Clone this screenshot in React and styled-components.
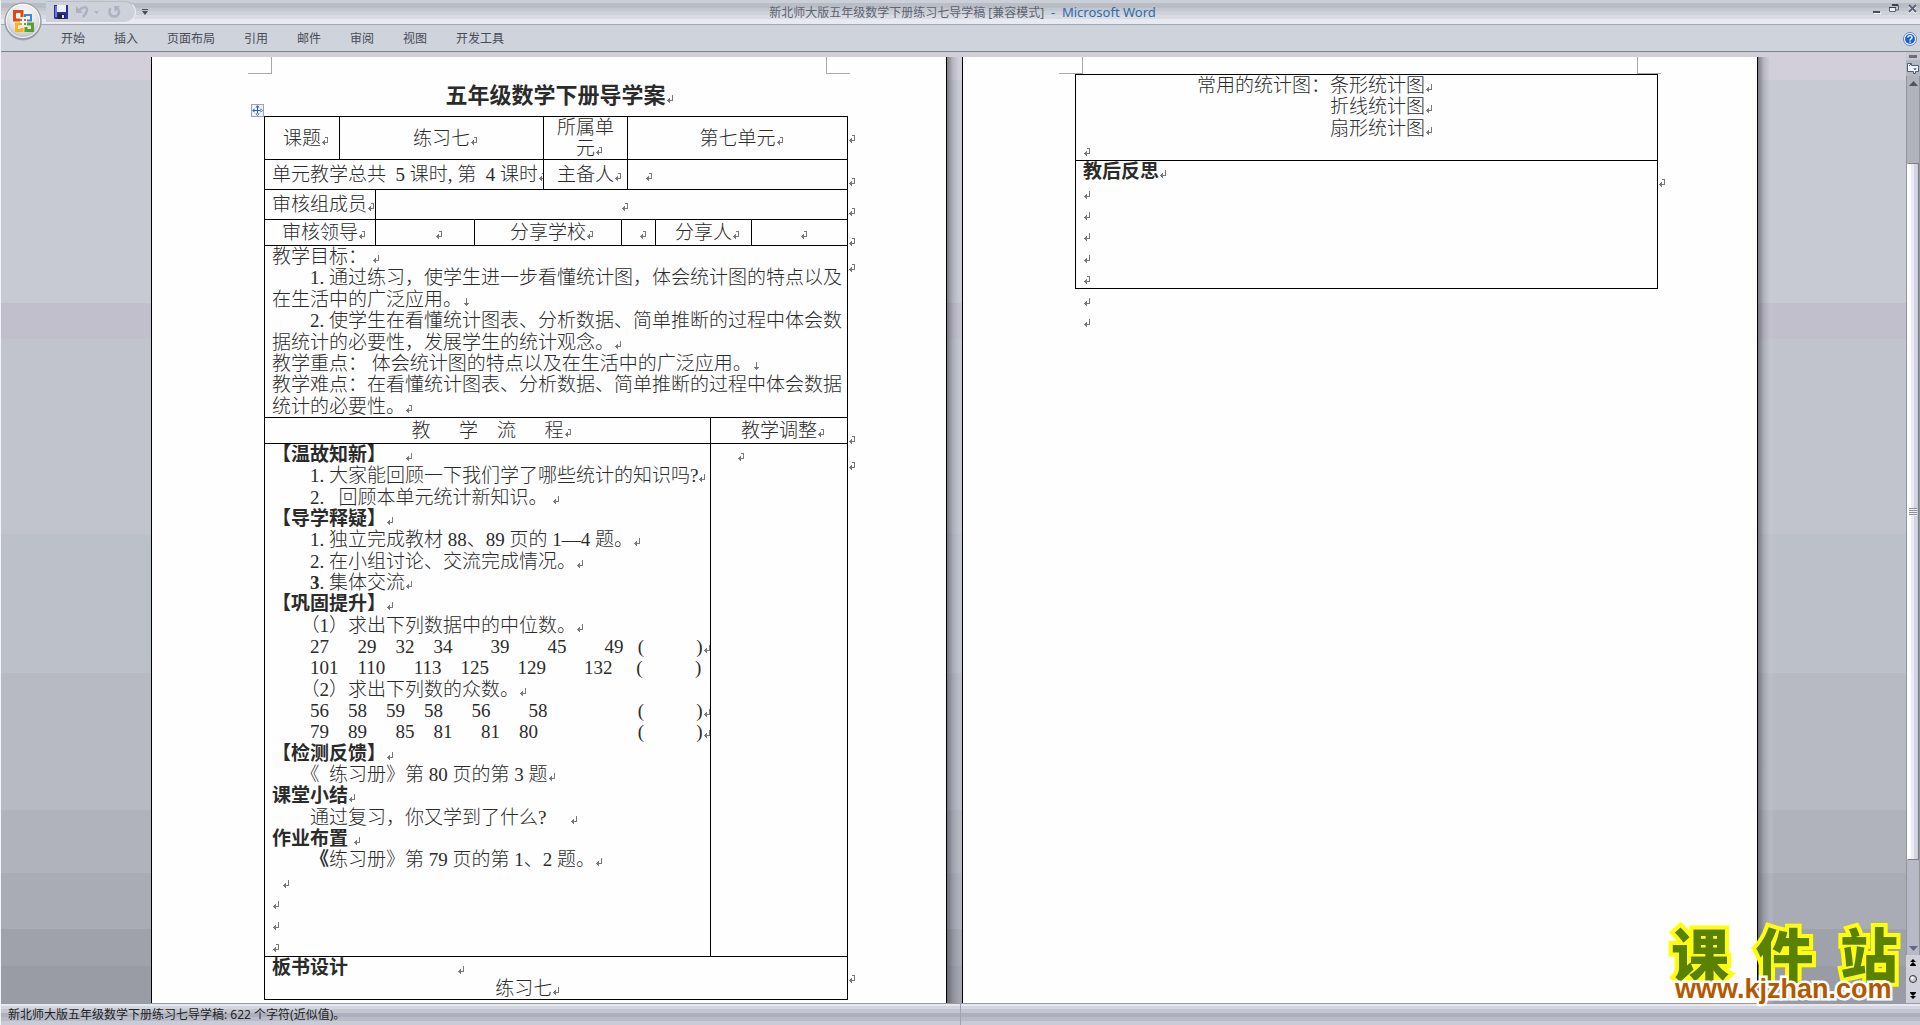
import React from "react";
import styled, { createGlobalStyle, css } from "styled-components";

const GlobalStyle = createGlobalStyle`
  * {
    box-sizing: border-box;
  }

  body {
    margin: 0;
    background: #b7bac3;
    font-family: "Noto Sans", "Noto Sans CJK SC", sans-serif;
    font-size: 12px;
  }

  button {
    border: 0;
    padding: 0;
    background: none;
    font: inherit;
    color: inherit;
    display: flex;
    align-items: center;
    justify-content: center;
  }
`;

const Window = styled.div`
  position: relative;
  height: 100vh;
  display: grid;
  grid-template-rows: 25px 27px minmax(0, 1fr) 22px;
  border-left: 1px solid #f2f3f6;
  overflow: hidden;
`;

const TitleBar = styled.header`
  display: grid;
  grid-template-columns: 1fr auto 1fr;
  align-items: center;
  border-bottom: 1px solid #a3a7b1;
  background: linear-gradient(
    #cbcfd8 0 3px,
    #b9bdc6 3px 8px,
    #c3c7d0 8px 11px,
    #cdd1da 11px 15px,
    #d8dbe2 15px 19px,
    #e7eaf2 19px 24px
  );
`;

const QuickAccess = styled.div`
  display: flex;
  align-items: center;
  align-self: start;
  gap: 6px;
  margin: 1px 0 0 45px;
`;

const QuickPill = styled.div`
  display: flex;
  align-items: center;
  gap: 8px;
  width: 90px;
  height: 22px;
  padding-left: 8px;
  border: 1px solid #eceef3;
  border-top-color: #b9bdc6;
  border-left: 0;
  border-radius: 0 12px 12px 0;
  background: #cdd1da;
`;

const Caption = styled.h1`
  margin: 0;
  padding-left: 4px;
  font-size: 12px;
  line-height: 20px;
  font-weight: 400;
  color: #5d6371;
  white-space: pre;

  span {
    font-size: 13px;
    color: #2d6ca8;
  }
`;

const WindowButtons = styled.div`
  display: flex;
  justify-content: flex-end;
  gap: 8px;
  padding: 0 2px 6px 0;
`;

const Ribbon = styled.nav`
  display: flex;
  align-items: center;
  gap: 29px;
  padding: 1px 3px 0 60px;
  background: #cfd3dc;
  border-bottom: 1px solid #7e828b;
`;

const Tab = styled.button`
  line-height: 22px;
  color: #464b57;
`;

const HelpButton = styled.button`
  margin-left: auto;
`;

const OfficeButton = styled.button`
  position: absolute;
  top: 1px;
  left: 2px;
`;

const Workspace = styled.main`
  display: flex;
  min-height: 0;
`;

const Desk = styled.div`
  flex: 1;
  display: flex;
  justify-content: center;
  padding: 5px 0 0 2px;
  overflow: hidden;
  background: linear-gradient(
    #d2cfda 0 28px,
    #c8cad3 28px 251px,
    #c1bfcc 251px 287px,
    #c2c4cd 287px 482px,
    #bcc0c9 482px 621px,
    #b7bac3 621px 758px,
    #b0b3bc 758px 821px,
    #a9acb5 821px 877px,
    #9fa2aa 877px 914px,
    #999ca5 914px
  );
`;

const Page = styled.article`
  flex: 0 1 796px;
  min-width: 0;
  border: solid #000;
  border-width: 0 1px;
  background: #fefefe;
`;

const PageShade = styled.div`
  flex: 0 0 15px;
  margin-right: ${(props) => (props.$last ? "-15px" : 0)};
  background: linear-gradient(
    90deg,
    rgba(70, 72, 80, 0.6),
    rgba(110, 112, 122, 0.25) 6px,
    rgba(200, 202, 214, 0.2) 12px
  );
`;

const PageMargin = styled.div`
  display: flex;
  justify-content: space-between;
  height: 17px;
  padding: 0 96px;
`;

const Corner = styled.span`
  width: 24px;
  border-bottom: 1px solid #a8a8b4;
  border-${(props) => props.$side}: 1px solid #a8a8b4;
`;

const PageBody = styled.div`
  padding: 0 84px 0 112px;
  font-family: "Liberation Serif", "Noto Sans CJK SC", serif;
  font-size: 19px;
  font-weight: 300;
  line-height: 21px;
  color: #2b2b2b;
`;

const DocTitle = styled.h2`
  display: flex;
  align-items: center;
  justify-content: center;
  height: 42px;
  margin: 0;
  padding-right: 15px;
  font-size: 22px;
  font-weight: 700;
`;

const TableFrame = styled.div`
  position: relative;
`;

const MoveHandle = styled.button`
  position: absolute;
  top: -12px;
  left: -13px;
  width: 13px;
  height: 13px;
  border: 1px solid #9aa3b8;
  background: #eef1f8;
`;

const Table = styled.table`
  width: 100%;
  table-layout: fixed;
  border-collapse: collapse;
`;

const Row = styled.tr`
  height: ${(props) => props.$height}px;
`;

const Cell = styled.td`
  padding: 0 7px;
  border: 1px solid #000;
  overflow: hidden;
  white-space: pre;
  text-align: ${(props) => (props.$left ? "left" : "center")};
  ${(props) =>
    props.$top &&
    css`
      vertical-align: top;
    `}
`;

const RowEnd = styled.td`
  padding: 14px 0 0;
  line-height: 12px;
  vertical-align: top;
`;

const Lines = styled.div`
  display: grid;
  grid-auto-rows: 1fr;
  height: ${(props) => props.$height}px;
`;

const Line = styled.div`
  line-height: 21px;
  white-space: pre;

  b {
    font-weight: 700;
  }
`;

const MarkIcon = styled.svg`
  width: 8px;
  height: 8px;
  margin-right: -8px;
  fill: none;
  stroke: #7a7a7a;
  shape-rendering: crispEdges;
`;

const Scroller = styled.div`
  flex: 0 0 14px;
  display: flex;
  flex-direction: column;
  align-items: stretch;
  background: #c5c8d1;
`;

const SplitHandle = styled.div`
  width: 8px;
  height: 3px;
  margin: 3px auto 2px;
  background: #6b6e76;
`;

const RulerButton = styled.button`
  height: 16px;
  background: #b3b8c3;
`;

const Track = styled.div`
  flex: 1;
  display: flex;
  flex-direction: column;
  border: solid #92959e;
  border-width: 0 1px;
  background: #b0b3bc;
`;

const ArrowButton = styled.button`
  height: 14px;
`;

const Thumb = styled.div`
  flex: 0 1 697px;
  margin-top: 73px;
  display: flex;
  align-items: center;
  justify-content: center;
  border: 1px solid #7c7f88;
  border-left-color: #fff;
  background: linear-gradient(90deg, #fff 0 3px, #eceaf4 3px 6px, #d3d6e2 6px 9px, #c8cbd6 9px);
`;

const Grip = styled.div`
  width: 8px;
  height: 8px;
  background: repeating-linear-gradient(#8b8e98 0 1px, #f2f3f7 1px 2px);
`;

const TrackEnd = styled.div`
  flex: 1;
  display: flex;
  flex-direction: column;
  justify-content: flex-end;
  background: #b7bac6;
`;

const Browse = styled.div`
  display: flex;
  flex-direction: column;
  justify-content: space-around;
  height: 48px;
  background: #cfd1da;
`;

const StatusBar = styled.footer`
  display: grid;
  grid-template-columns: 1fr 1fr;
  align-items: center;
  border-top: 1px solid #989ba5;
  background: linear-gradient(
    #e6e8ef 0 2px,
    #d3d6df 2px 5px,
    #c3c6d0 5px 9px,
    #adb0bc 9px 13px,
    #b9bcc8 13px 17px,
    #c9ccd7 17px
  );
  color: #222;

  span {
    padding-left: 7px;
    line-height: 21px;
    border-right: 1px solid #a0a3ad;
  }
`;

const SiteLogo = styled.a`
  position: absolute;
  right: 22px;
  bottom: 22px;
  width: 227px;
  text-decoration: none;
`;

const LogoName = styled.div`
  display: flex;
  justify-content: space-between;
  font-family: "Noto Sans CJK SC", sans-serif;
  font-size: 58px;
  line-height: 46px;
  font-weight: 900;
  color: #5a8200;
  -webkit-text-stroke: 8px #ff0;
  paint-order: stroke fill;
  text-shadow: 0 0 1px #fff;
`;

const LogoUrl = styled.div`
  padding-left: 4px;
  font-family: "Liberation Sans", sans-serif;
  font-size: 27px;
  line-height: 28px;
  font-weight: 700;
  color: #b35900;
  -webkit-text-stroke: 5px #fff;
  paint-order: stroke fill;
`;

const markPaths = {
  paragraph: "M6.5 0v5.5H1M3.5 3v5M2.5 4v3",
  cell: "M4 .5h2.5v5H1M3.5 3v5M2.5 4v3",
  line: "M4.5 0v8M2 5.5h5M3 6.5h3",
};

function Mark({ type = "paragraph" }) {
  return (
    <MarkIcon viewBox="0 0 8 8" aria-hidden="true">
      <path d={markPaths[type]} />
    </MarkIcon>
  );
}

// half-width blanks, half an em each
const sp = (count) => "\u2002".repeat(count);

function TextLines({ lines, height }) {
  return (
    <Lines $height={height}>
      {lines.map(({ bold, text = "", mark = "paragraph" }, i) => (
        <Line key={i}>
          {bold && <b>{bold}</b>}
          {text}
          {mark !== "none" && <Mark type={mark} />}
        </Line>
      ))}
    </Lines>
  );
}

const goals = [
  { text: "教学目标： " },
  { text: `${sp(4)}1. 通过练习，使学生进一步看懂统计图，体会统计图的特点以及`, mark: "none" },
  { text: "在生活中的广泛应用。", mark: "line" },
  { text: `${sp(4)}2. 使学生在看懂统计图表、分析数据、简单推断的过程中体会数`, mark: "none" },
  { text: "据统计的必要性，发展学生的统计观念。" },
  { text: "教学重点： 体会统计图的特点以及在生活中的广泛应用。", mark: "line" },
  { text: "教学难点：在看懂统计图表、分析数据、简单推断的过程中体会数据", mark: "none" },
  { text: "统计的必要性。", mark: "cell" },
];

// each number is followed by its own count of half-width blanks
const series = (items) => sp(4) + items.map(([n, gap]) => n + sp(gap)).join("") + ` (${sp(5)} )`;

const process = [
  { bold: "【温故知新】", text: sp(2) },
  { text: `${sp(4)}1. 大家能回顾一下我们学了哪些统计的知识吗?` },
  { text: `${sp(4)}2. ${sp(1)}回顾本单元统计新知识。 ` },
  { bold: "【导学释疑】" },
  { text: `${sp(4)}1. 独立完成教材 88、89 页的 1—4 题。` },
  { text: `${sp(4)}2. 在小组讨论、交流完成情况。` },
  { bold: `${sp(4)}3`, text: ". 集体交流" },
  { bold: "【巩固提升】" },
  { text: `${sp(3)}（1）求出下列数据中的中位数。` },
  { text: series([[27, 3], [29, 2], [32, 2], [34, 4], [39, 4], [45, 4], [49, 1]]) },
  { text: series([[101, 2], [110, 3], [113, 2], [125, 3], [129, 4], [132, 2]]), mark: "none" },
  { text: `${sp(3)}（2）求出下列数的众数。` },
  { text: series([[56, 2], [58, 2], [59, 2], [58, 3], [56, 4], [58, 9]]) },
  { text: series([[79, 2], [89, 3], [85, 2], [81, 3], [81, 2], [80, 10]]) },
  { bold: "【检测反馈】" },
  { text: `${sp(3)}《${sp(1)}练习册》第 80 页的第 3 题` },
  { bold: "课堂小结" },
  { text: `${sp(4)}通过复习，你又学到了什么? ${sp(2)}` },
  { bold: "作业布置", text: " " },
  { bold: `${sp(4)}《`, text: "练习册》第 79 页的第 1、2 题。" },
  { text: sp(1) },
  {},
  {},
  { mark: "cell" },
];

const board = [
  { bold: "板书设计", text: `${sp(11)} ` },
  { text: `${sp(23)} 练习七` },
];

const charts = [
  { text: `${sp(12)}常用的统计图：条形统计图` },
  { text: `${sp(26)}折线统计图` },
  { text: `${sp(26)}扇形统计图` },
  { mark: "cell" },
];

const reflection = [{ bold: "教后反思" }, {}, {}, {}, {}, { mark: "cell" }];

const columns = [75, 36, 99, 69, 78, 6, 28, 55, 41, 96, 15];

function DocRow({ height, children }) {
  return (
    <Row $height={height}>
      {children}
      <RowEnd>
        <Mark type="cell" />
      </RowEnd>
    </Row>
  );
}

function Sheet({ children }) {
  return (
    <Page>
      <PageMargin>
        <Corner $side="right" />
        <Corner $side="left" />
      </PageMargin>
      <PageBody>{children}</PageBody>
    </Page>
  );
}

function LessonTable() {
  return (
    <TableFrame>
      <MoveHandle aria-label="移动表格">
        <svg width="11" height="11" viewBox="0 0 11 11" fill="#2f62bd">
          <path d="M5 1h1v9H5zM1 5h9v1H1zM5.500 0l2 2.500h-4zM5.500 11l2-2.500h-4zM0 5.500l2.500-2v4zM11 5.500l-2.500-2v4z" />
        </svg>
      </MoveHandle>
      <Table>
        <colgroup>
          {columns.map((width, i) => (
            <col key={i} width={width} />
          ))}
        </colgroup>
        <tbody>
          <DocRow height={43}>
            <Cell>课题<Mark type="cell" /></Cell>
            <Cell colSpan={3}>练习七<Mark type="cell" /></Cell>
            <Cell colSpan={2}>所属单{"\n"}元<Mark type="cell" /></Cell>
            <Cell colSpan={4}>第七单元<Mark type="cell" /></Cell>
          </DocRow>
          <DocRow height={30}>
            <Cell colSpan={4} $left>
              {`单元教学总共${sp(1)}5 课时, 第${sp(1)}4 课时`}
              <Mark type="cell" />
            </Cell>
            <Cell colSpan={2}>主备人<Mark type="cell" /></Cell>
            <Cell colSpan={4} $left>{sp(1)}<Mark type="cell" /></Cell>
          </DocRow>
          <DocRow height={30}>
            <Cell colSpan={2} $left>审核组成员<Mark type="cell" /></Cell>
            <Cell colSpan={8}>{sp(2)}<Mark type="cell" /></Cell>
          </DocRow>
          <DocRow height={26}>
            <Cell colSpan={2}>审核领导<Mark type="cell" /></Cell>
            <Cell>{sp(2)}<Mark type="cell" /></Cell>
            <Cell colSpan={2}>分享学校<Mark type="cell" /></Cell>
            <Cell colSpan={2}><Mark type="cell" /></Cell>
            <Cell colSpan={2}>分享人<Mark type="cell" /></Cell>
            <Cell><Mark type="cell" /></Cell>
          </DocRow>
          <DocRow height={172}>
            <Cell colSpan={10} $left $top>
              <TextLines lines={goals} height={171} />
            </Cell>
          </DocRow>
          <DocRow height={26}>
            <Cell colSpan={8}>{`教${sp(3)}学${sp(2)}流${sp(3)}程`}<Mark type="cell" /></Cell>
            <Cell colSpan={2}>教学调整<Mark type="cell" /></Cell>
          </DocRow>
          <DocRow height={513}>
            <Cell colSpan={8} $left $top>
              <TextLines lines={process} height={512} />
            </Cell>
            <Cell colSpan={2} $left $top>{sp(2)}<Mark type="cell" /></Cell>
          </DocRow>
          <DocRow height={43}>
            <Cell colSpan={10} $left $top>
              <TextLines lines={board} height={42} />
            </Cell>
          </DocRow>
        </tbody>
      </Table>
    </TableFrame>
  );
}

function BoardTable() {
  return (
    <Table>
      <colgroup>
        <col />
        <col width="15" />
      </colgroup>
      <tbody>
        <Row $height={86}>
          <Cell $left $top>
            <TextLines lines={charts} height={85} />
          </Cell>
          <td />
        </Row>
        <DocRow height={128}>
          <Cell $left $top>
            <TextLines lines={reflection} height={127} />
          </Cell>
        </DocRow>
      </tbody>
    </Table>
  );
}

const AfterTable = styled.div`
  padding-left: 8px;
`;

function OfficeLogo() {
  return (
    <svg width="40" height="40" viewBox="0 0 40 40">
      <defs>
        <radialGradient id="orb" cx="50%" cy="35%" r="65%">
          <stop offset="0" stopColor="#fff" />
          <stop offset=".6" stopColor="#e4e5ea" />
          <stop offset="1" stopColor="#b4b7c0" />
        </radialGradient>
      </defs>
      <circle cx="20" cy="21" r="18.500" fill="#8d9099" opacity=".6" />
      <circle cx="20" cy="20" r="18" fill="url(#orb)" stroke="#8f929b" />
      <circle cx="20" cy="20" r="16.500" fill="none" stroke="#fff" opacity=".8" />
      <g fill="none" strokeWidth="3">
        <path d="M17 19h-5.500V10.500H19V16" stroke="#dd4b12" />
        <path d="M22 16v-2h6v5.500h-4" stroke="#3d88d6" strokeWidth="2" />
        <path d="M17 23h-3.500v6.500H19V27" stroke="#f5b516" />
        <path d="M24 23h5.500v6.500H23V26" stroke="#5a9e2f" />
      </g>
      <path d="M17 18h2v2h-2zM21 18h2v2h-2z" fill="#e8641b" />
      <path d="M17 22h2v2h-2z" fill="#f0a01a" />
      <path d="M21 22h2v2h-2z" fill="#5a9e2f" />
    </svg>
  );
}

const tabs = ["开始", "插入", "页面布局", "引用", "邮件", "审阅", "视图", "开发工具"];

export default function App() {
  return (
    <Window lang="zh-CN">
      <GlobalStyle />
      <TitleBar>
        <QuickAccess>
          <QuickPill>
            <button aria-label="保存">
              <svg width="14" height="14" viewBox="0 0 14 14">
                <path d="M0 0h14v14H1l-1-1z" fill="#2b2f9a" />
                <path d="M1 1h2v11H1z" fill="#6b78e0" />
                <path d="M3 0h9v7H3z" fill="#eef1fb" />
                <path d="M4 9h7v5H4z" fill="#20233f" />
                <path d="M8 10h2v3H8z" fill="#dfe3f2" />
              </svg>
            </button>
            <button aria-label="撤消">
              <svg width="24" height="14" viewBox="0 0 24 14" fill="none">
                <path d="M3 5.500c3-4 8-4 8-1 0 3-1 4-4 7.500" stroke="#aeb0c1" strokeWidth="2.500" />
                <path d="M0 1v7h7z" fill="#aeb0c1" />
                <path d="M18 6h5l-2.500 3z" fill="#aeb0c1" />
              </svg>
            </button>
            <button aria-label="重复">
              <svg width="13" height="14" viewBox="0 0 13 14" fill="none">
                <path d="M2.500 3c-2.500 5 0 8.500 4 8.500s6-4.500 3-8" stroke="#aeb0c1" strokeWidth="2.500" />
                <path d="M6 1h6L7 7z" fill="#aeb0c1" />
              </svg>
            </button>
          </QuickPill>
          <button aria-label="自定义快速访问工具栏">
            <svg width="6" height="6" viewBox="0 0 6 6" fill="#4a4d55">
              <path d="M0 0h6v1H0zM0 2h6L3 6z" />
            </svg>
          </button>
        </QuickAccess>
        <Caption>
          新北师大版五年级数学下册练习七导学稿 [兼容模式]
          <span>{"  -  Microsoft Word"}</span>
        </Caption>
        <WindowButtons>
          <button aria-label="最小化">
            <svg width="8" height="10" viewBox="0 0 8 10">
              <path d="M0 7h7v2H0z" fill="#4a4d58" />
              <path d="M1 9h7v1H1z" fill="#fff" />
            </svg>
          </button>
          <button aria-label="还原">
            <svg width="10" height="10" viewBox="0 0 10 10" fill="none">
              <path d="M3 1h6.500v5H7" stroke="#5d6477" />
              <path d="M.5 3.500h6v4h-6z" stroke="#5d6477" fill="#eef0f5" />
              <path d="M3 0h6v2H3zM0 3h7v1H0z" fill="#3e414b" />
            </svg>
          </button>
          <button aria-label="关闭">
            <svg width="11" height="10" viewBox="0 0 11 10" fill="none">
              <path d="M2 2l7 7M9 2L2 9" stroke="#fff" strokeWidth="2" />
              <path d="M2 1l7 7M9 1L2 8" stroke="#5d6477" strokeWidth="2" />
            </svg>
          </button>
        </WindowButtons>
      </TitleBar>

      <Ribbon>
        {tabs.map((tab) => (
          <Tab key={tab}>{tab}</Tab>
        ))}
        <HelpButton aria-label="帮助">
          <svg width="14" height="14" viewBox="0 0 14 14" fill="none">
            <circle cx="7" cy="7" r="6.500" fill="#fff" stroke="#5a83bd" />
            <circle cx="7" cy="7" r="5" fill="#1f5fd6" />
            <path d="M5 5.500c0-2.500 4-2.500 4 0 0 1.500-2 1.200-2 3M7 9.500v1.300" stroke="#fff" strokeWidth="1.400" />
          </svg>
        </HelpButton>
      </Ribbon>

      <Workspace>
        <Desk>
          <Sheet>
            <DocTitle>
              <span>五年级数学下册导学案<Mark /></span>
            </DocTitle>
            <LessonTable />
          </Sheet>
          <PageShade />
          <Sheet>
            <BoardTable />
            <AfterTable>
              <Line><Mark /></Line>
              <Line><Mark /></Line>
            </AfterTable>
          </Sheet>
          <PageShade $last />
        </Desk>
        <Scroller>
          <SplitHandle />
          <RulerButton aria-label="标尺">
            <svg width="12" height="12" viewBox="0 0 12 12">
              <path d="M.5 1.500h4v2h7v6h-3v2h-2v-2h-6z" fill="#f1f3f8" stroke="#4a5f7d" />
              <path d="M2 4l2-2M7 6l1 2 1-2" stroke="#4a5f7d" fill="none" />
            </svg>
          </RulerButton>
          <Track>
            <ArrowButton aria-label="向上滚动">
              <svg width="9" height="5" viewBox="0 0 9 5">
                <path d="M4.500 0L9 5H0z" fill="#50545e" />
              </svg>
            </ArrowButton>
            <Thumb>
              <Grip />
            </Thumb>
            <TrackEnd>
              <ArrowButton aria-label="向下滚动">
                <svg width="9" height="5" viewBox="0 0 9 5">
                  <path d="M0 0h9L4.500 5z" fill="#5f6980" />
                </svg>
              </ArrowButton>
            </TrackEnd>
          </Track>
          <Browse>
            <button aria-label="前一页">
              <svg width="6" height="7" viewBox="0 0 6 7">
                <path d="M3 0l3 3H0zM3 3l3 3H0zM0 6h6v1H0z" />
              </svg>
            </button>
            <button aria-label="选择浏览对象">
              <svg width="8" height="8" viewBox="0 0 8 8">
                <circle cx="4" cy="4" r="3.500" fill="#c9cbd0" stroke="#33353b" />
                <circle cx="3" cy="3" r="1.500" fill="#fff" />
              </svg>
            </button>
            <button aria-label="下一页">
              <svg width="6" height="7" viewBox="0 0 6 7">
                <path d="M0 0h6v1H0zM0 1h6L3 4zM0 4h6L3 7z" />
              </svg>
            </button>
          </Browse>
        </Scroller>
      </Workspace>

      <StatusBar>
        <span>新北师大版五年级数学下册练习七导学稿: 622 个字符(近似值)。</span>
      </StatusBar>

      <OfficeButton aria-label="Office 按钮">
        <OfficeLogo />
      </OfficeButton>

      <SiteLogo href="#">
        <LogoName>
          <span>课</span>
          <span>件</span>
          <span>站</span>
        </LogoName>
        <LogoUrl>www.kjzhan.com</LogoUrl>
      </SiteLogo>
    </Window>
  );
}
